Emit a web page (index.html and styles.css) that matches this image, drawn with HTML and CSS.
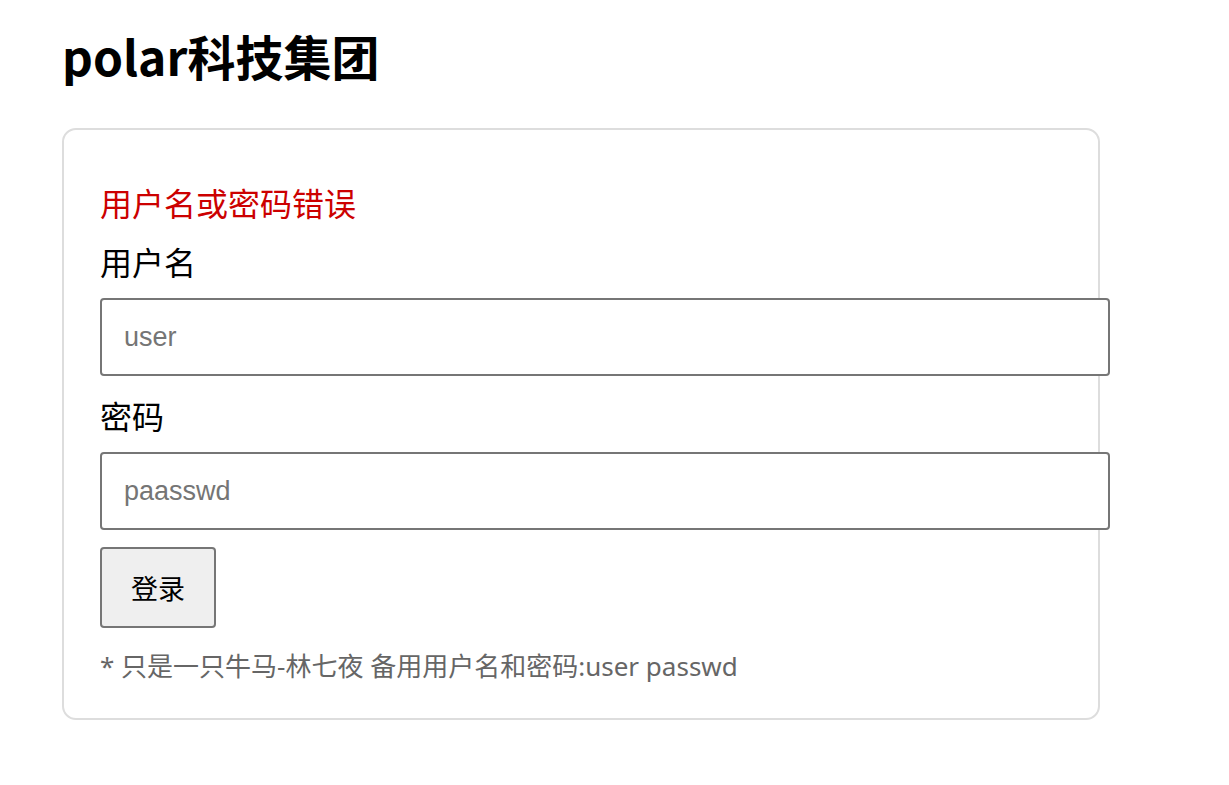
FILE: index.html
```html
<!DOCTYPE html>
<html lang="zh-CN">
<head>
<meta charset="utf-8">
<title>polar科技集团</title>
<link rel="stylesheet" href="styles.css">
</head>
<body>
<div class="page">
  <h1 class="title">polar科技集团</h1>
  <form class="card">
    <p class="error">用户名或密码错误</p>
    <label class="label" for="u">用户名</label>
    <input class="field" id="u" type="text" placeholder="user">
    <label class="label label-second" for="p">密码</label>
    <input class="field" id="p" type="password" placeholder="paasswd">
    <button class="btn" type="button">登录</button>
    <p class="note">* 只是一只牛马-林七夜 备用用户名和密码:user passwd</p>
  </form>
</div>
</body>
</html>
```

FILE: styles.css
```css
html, body {
  margin: 0;
  padding: 0;
  background: #fff;
}

body {
  font-family: "Noto Sans CJK SC", "Noto Sans", sans-serif;
  color: #000;
}

.page {
  width: 1038px;
  margin-left: 62px;
  padding-top: 26px;
}

.title {
  margin: 0;
  font-size: 48px;
  font-weight: 700;
  line-height: 58px;
}

.card {
  margin-top: 44px;
  border: 2px solid #dddddd;
  border-radius: 14px;
  padding: 36px 36px 34px;
  display: flex;
  flex-direction: column;
  align-items: flex-start;
}

.error {
  margin: 16px 0 19px;
  color: #cc0000;
  font-size: 32px;
  line-height: 40px;
}

.label {
  display: block;
  font-size: 32px;
  line-height: 40px;
}

.label-second {
  margin-top: 19px;
}

.field {
  display: block;
  box-sizing: content-box;
  width: 100%;
  height: 74px;
  margin: 17px 0 0;
  padding: 0 22px;
  border: 2px solid #767676;
  border-radius: 4px;
  font-family: "Liberation Sans", Arial, sans-serif;
  font-size: 27px;
  color: #000;
  background: #fff;
  outline: none;
}

.field::placeholder {
  color: #757575;
}

.btn {
  margin-top: 17px;
  padding: 19px 29px;
  border: 2px solid #767676;
  border-radius: 4px;
  background: #efefef;
  font-family: "Noto Sans CJK SC", sans-serif;
  font-size: 27px;
  line-height: 39px;
  color: #000;
}

.note {
  margin: 20px 0 0;
  color: #666666;
  font-family: "Noto Sans", "Noto Sans CJK SC", sans-serif;
  font-size: 26px;
  line-height: 36px;
}
```
